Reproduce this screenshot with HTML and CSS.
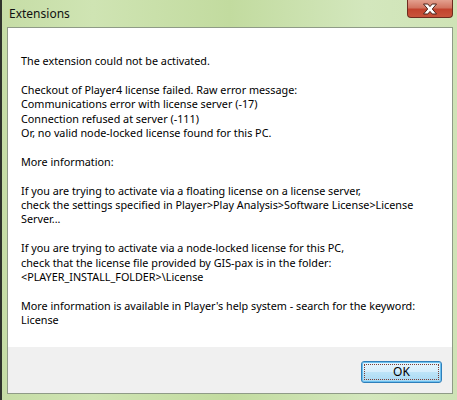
FILE: index.html
```
<!DOCTYPE html>
<html>
<head>
<meta charset="utf-8">
<link rel="stylesheet" href="styles.css">
</head>
<body>
<div class="window">
  <div class="titlebar">
    <span class="title">Extensions</span>
    <div class="close">
      <svg width="18" height="12" viewBox="0 0 18 12">
        <path d="M2.5 1 H6.8 L9 3.6 L11.2 1 H15.5 L11.3 6 L15.5 11 H11.2 L9 8.4 L6.8 11 H2.5 L6.7 6 Z" fill="#ffffff" stroke="#4a2018" stroke-width="1" stroke-linejoin="round"/>
      </svg>
    </div>
  </div>
  <div class="client">
    <div class="content">
      <p>The extension could not be activated.</p>
      <p>Checkout of Player4 license failed. Raw error message:<br>Communications error with license server (-17)<br>Connection refused at server (-111)<br>Or, no valid node-locked license found for this PC.</p>
      <p>More information:</p>
      <p>If you are trying to activate via a floating license on a license server,<br>check the settings specified in Player&gt;Play Analysis&gt;Software License&gt;License<br>Server...</p>
      <p>If you are trying to activate via a node-locked license for this PC,<br>check that the license file provided by GIS-pax is in the folder:<br>&lt;PLAYER_INSTALL_FOLDER&gt;\License</p>
      <p>More information is available in Player's help system - search for the keyword:<br>License</p>
    </div>
    <div class="footer">
      <button class="ok"><span class="focus">OK</span></button>
    </div>
  </div>
</div>
</body>
</html>
```
FILE: styles.css
```
html, body {
  margin: 0;
  padding: 0;
}
body {
  width: 457px;
  height: 400px;
  overflow: hidden;
  font-family: "Segoe UI", "Noto Sans", "Open Sans", sans-serif;
  font-size: 10.8px;
  color: #000;
}
.window {
  box-sizing: border-box;
  width: 457px;
  height: 400px;
  display: flex;
  flex-direction: column;
  padding: 0 4px 6px 5px;
  border-left: 2px solid #2f332c;
  background: linear-gradient(90deg, #c6dda6 0%, #cfe4b3 20%, #c2db9f 50%, #d3e7bd 80%, #cfe3b6 100%);
}
.titlebar {
  height: 27px;
  flex: none;
  display: flex;
  justify-content: space-between;
  align-items: flex-start;
}
.title {
  padding: 6px 0 0 2px;
  font-size: 12px;
  line-height: 16px;
  color: #111;
}
.close {
  width: 46px;
  height: 18px;
  box-sizing: border-box;
  border: 1px solid #6e2b1e;
  border-top: none;
  border-radius: 0 0 4px 4px;
  background: linear-gradient(180deg, #e3a08f 0%, #d27561 45%, #c2432e 55%, #c9543c 100%);
  display: flex;
  align-items: center;
  justify-content: center;
}
.close svg {
  display: block;
}
.client {
  flex: 1;
  display: flex;
  flex-direction: column;
  border: 1px solid #8f9b87;
}
.content {
  flex: 1;
  background: #ffffff;
  padding: 26px 13px 0 13px;
  line-height: 14.4px;
}
.content p {
  margin: 0 0 14.4px 0;
  white-space: nowrap;
}
.footer {
  height: 46px;
  flex: none;
  background: #f0f0f0;
  display: flex;
  justify-content: flex-end;
  align-items: flex-start;
  padding: 14px 10px 0 0;
  box-sizing: border-box;
}
.ok {
  width: 81px;
  height: 22px;
  box-sizing: border-box;
  padding: 2px;
  border: 1px solid #2f7fba;
  border-radius: 3px;
  box-shadow: 0 0 0 1px #6cc0ef inset;
  background: linear-gradient(180deg, #e6f5fd 0%, #d5eefc 50%, #bde4f8 51%, #a9d9f3 100%);
  font-family: inherit;
  font-size: 12px;
  color: #000;
  display: flex;
  cursor: default;
}
.focus {
  flex: 1;
  display: flex;
  align-items: center;
  justify-content: center;
  border: 1px dotted #7a3f36;
  line-height: 14px;
}
```
